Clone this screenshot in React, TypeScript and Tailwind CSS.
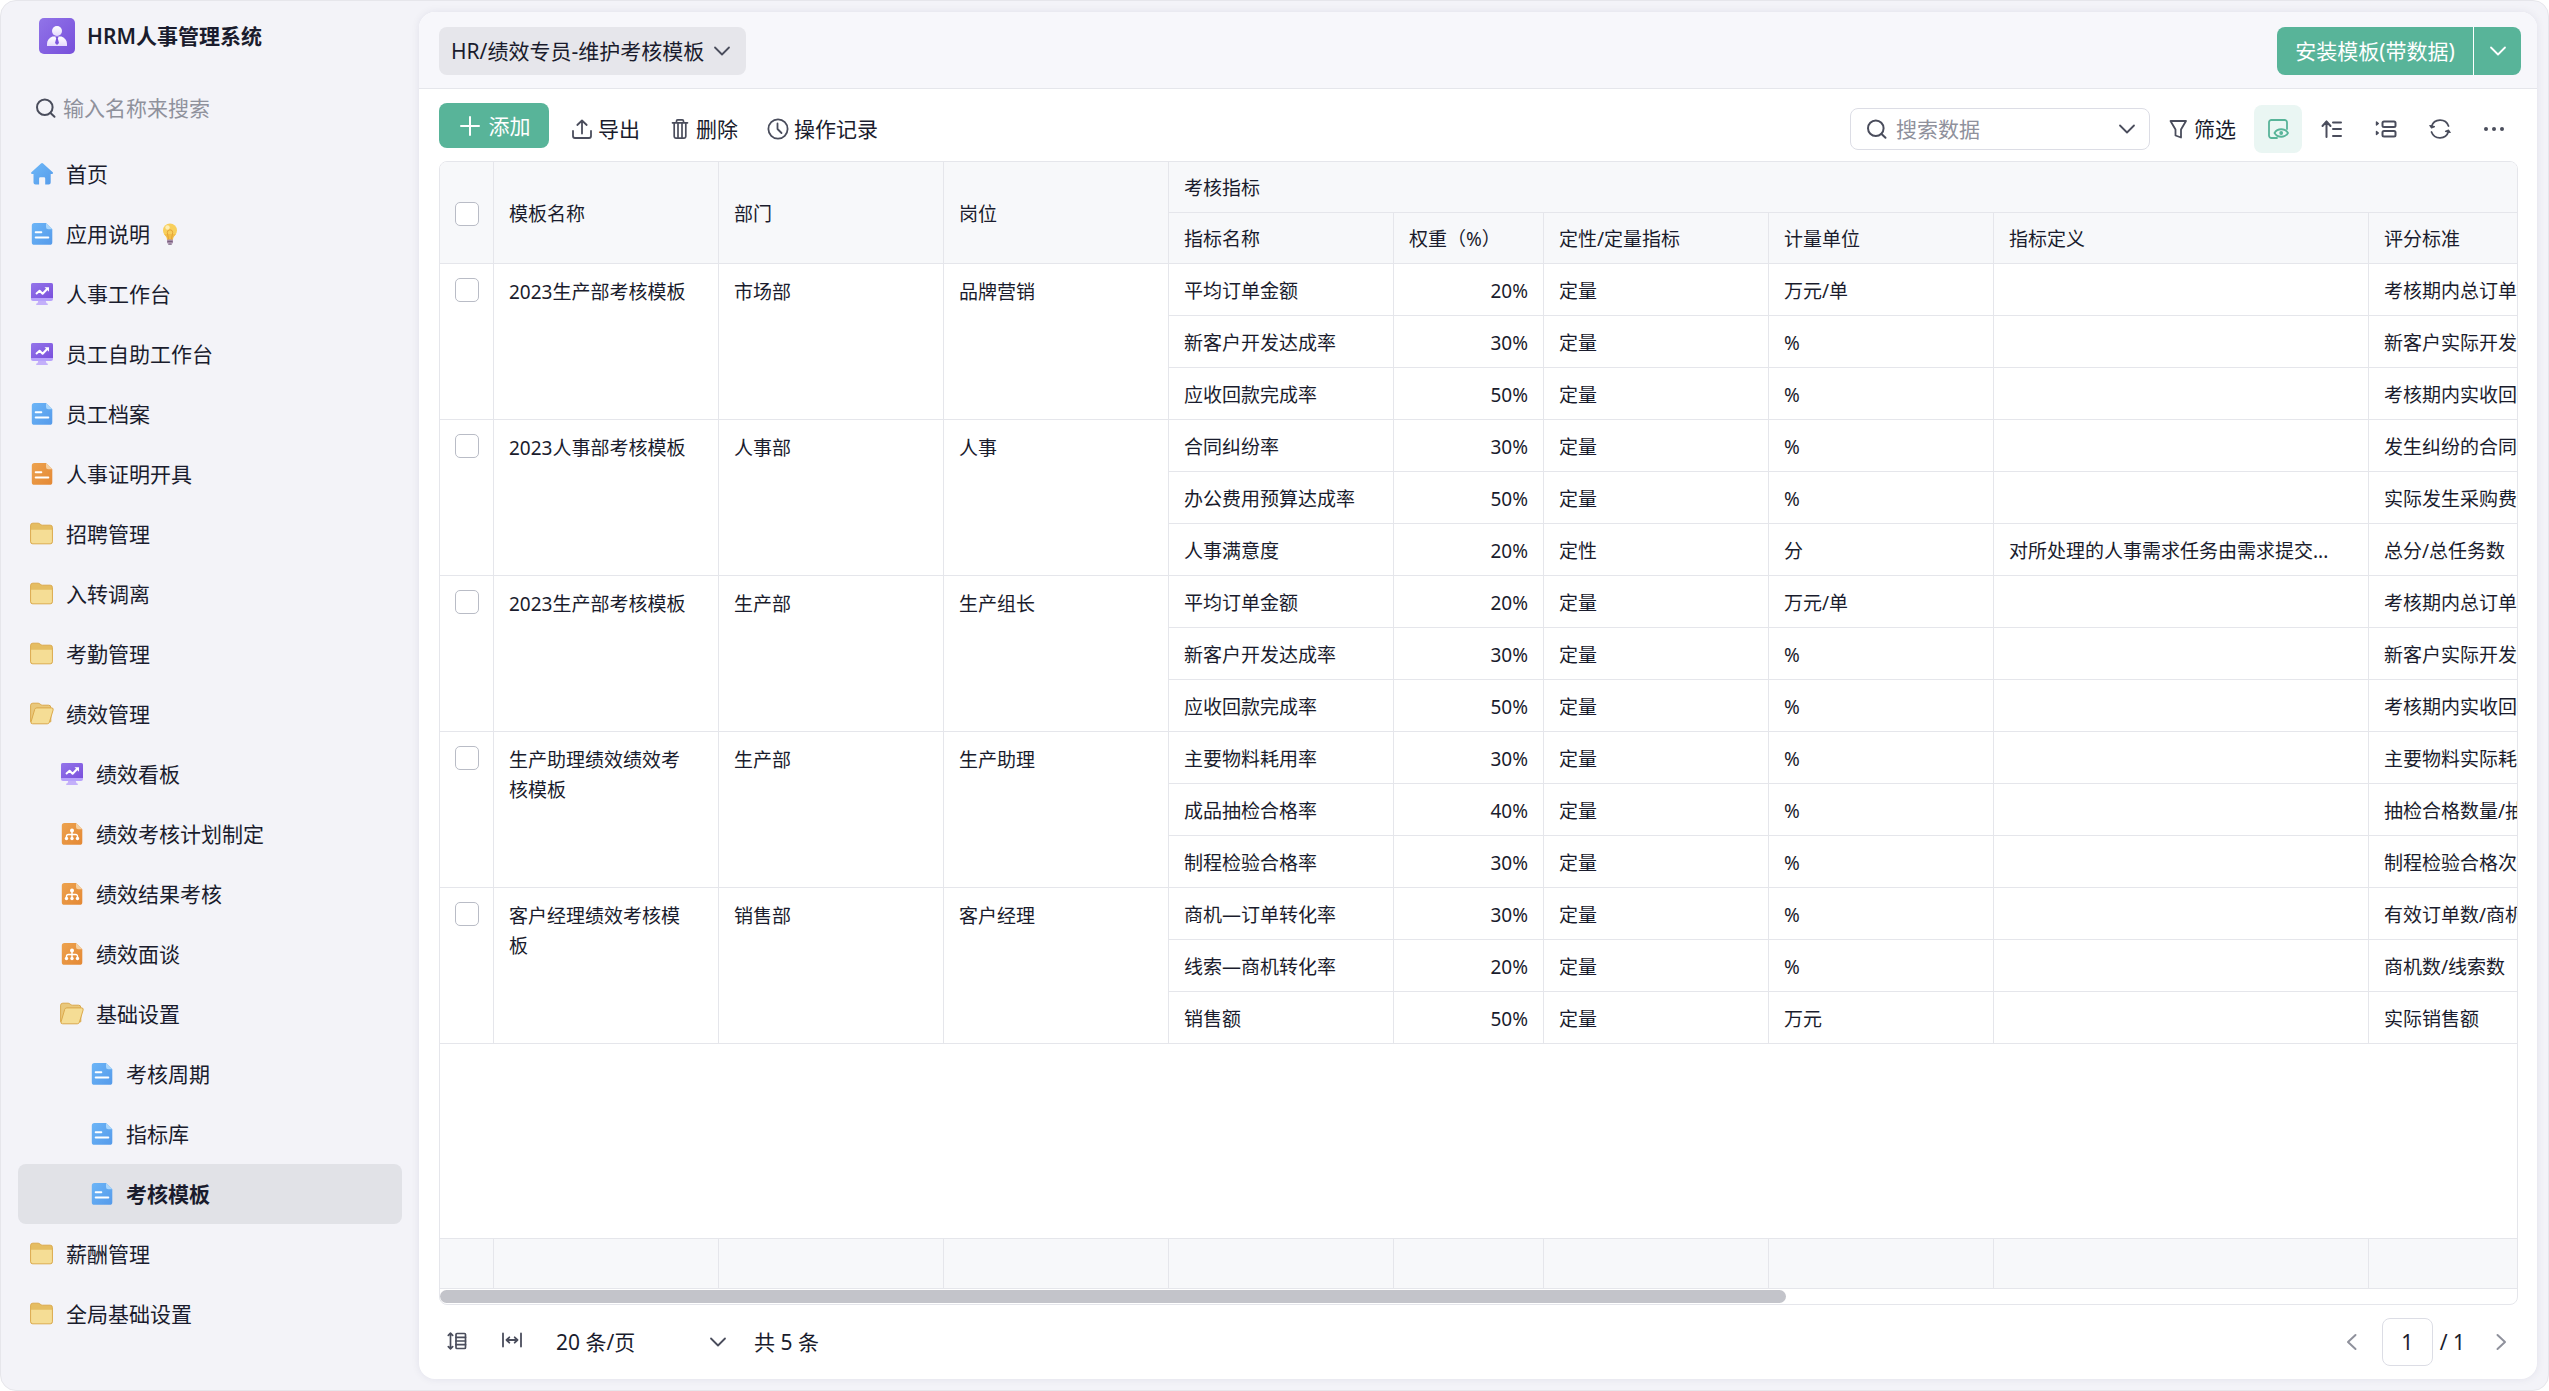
import { useState, type ReactNode } from "react";
import clsx from "clsx";

type IconName = "home" | "doc" | "docOrange" | "flow" | "board" | "folder" | "folderOpen";

type NavItem = {
  label: string;
  icon: IconName;
  level?: number;
  bulb?: boolean;
};

const NAV: NavItem[] = [
  { label: "首页", icon: "home" },
  { label: "应用说明", icon: "doc", bulb: true },
  { label: "人事工作台", icon: "board" },
  { label: "员工自助工作台", icon: "board" },
  { label: "员工档案", icon: "doc" },
  { label: "人事证明开具", icon: "docOrange" },
  { label: "招聘管理", icon: "folder" },
  { label: "入转调离", icon: "folder" },
  { label: "考勤管理", icon: "folder" },
  { label: "绩效管理", icon: "folderOpen" },
  { label: "绩效看板", icon: "board", level: 1 },
  { label: "绩效考核计划制定", icon: "flow", level: 1 },
  { label: "绩效结果考核", icon: "flow", level: 1 },
  { label: "绩效面谈", icon: "flow", level: 1 },
  { label: "基础设置", icon: "folderOpen", level: 1 },
  { label: "考核周期", icon: "doc", level: 2 },
  { label: "指标库", icon: "doc", level: 2 },
  { label: "考核模板", icon: "doc", level: 2 },
  { label: "薪酬管理", icon: "folder" },
  { label: "全局基础设置", icon: "folder" },
];

const INDENT = ["pl-3", "pl-[42px]", "pl-[72px]"];

type Metric = {
  name: string;
  weight: string;
  kind: string;
  unit: string;
  definition?: string;
  standard: string;
};

type Template = {
  name: string;
  dept: string;
  post: string;
  metrics: Metric[];
};

const SALES_METRICS: Metric[] = [
  { name: "平均订单金额", weight: "20%", kind: "定量", unit: "万元/单", standard: "考核期内总订单" },
  { name: "新客户开发达成率", weight: "30%", kind: "定量", unit: "%", standard: "新客户实际开发" },
  { name: "应收回款完成率", weight: "50%", kind: "定量", unit: "%", standard: "考核期内实收回" },
];

const TEMPLATES: Template[] = [
  { name: "2023生产部考核模板", dept: "市场部", post: "品牌营销", metrics: SALES_METRICS },
  {
    name: "2023人事部考核模板",
    dept: "人事部",
    post: "人事",
    metrics: [
      { name: "合同纠纷率", weight: "30%", kind: "定量", unit: "%", standard: "发生纠纷的合同" },
      { name: "办公费用预算达成率", weight: "50%", kind: "定量", unit: "%", standard: "实际发生采购费" },
      {
        name: "人事满意度",
        weight: "20%",
        kind: "定性",
        unit: "分",
        definition: "对所处理的人事需求任务由需求提交...",
        standard: "总分/总任务数",
      },
    ],
  },
  { name: "2023生产部考核模板", dept: "生产部", post: "生产组长", metrics: SALES_METRICS },
  {
    name: "生产助理绩效绩效考核模板",
    dept: "生产部",
    post: "生产助理",
    metrics: [
      { name: "主要物料耗用率", weight: "30%", kind: "定量", unit: "%", standard: "主要物料实际耗" },
      { name: "成品抽检合格率", weight: "40%", kind: "定量", unit: "%", standard: "抽检合格数量/抽" },
      { name: "制程检验合格率", weight: "30%", kind: "定量", unit: "%", standard: "制程检验合格次" },
    ],
  },
  {
    name: "客户经理绩效考核模板",
    dept: "销售部",
    post: "客户经理",
    metrics: [
      { name: "商机—订单转化率", weight: "30%", kind: "定量", unit: "%", standard: "有效订单数/商机" },
      { name: "线索—商机转化率", weight: "20%", kind: "定量", unit: "%", standard: "商机数/线索数" },
      { name: "销售额", weight: "50%", kind: "定量", unit: "万元", standard: "实际销售额" },
    ],
  },
];

const COLS = [
  "w-[54px]",
  "w-[225px]",
  "w-[225px]",
  "w-[225px]",
  "w-[225px]",
  "w-[150px]",
  "w-[225px]",
  "w-[225px]",
  "w-[375px]",
  "w-[375px]",
];

/* ---------- icons ---------- */

function Line({ children, className, width = 2 }: { children: ReactNode; className?: string; width?: number }) {
  return (
    <svg
      viewBox="0 0 24 24"
      fill="none"
      stroke="currentColor"
      strokeWidth={width}
      strokeLinecap="round"
      strokeLinejoin="round"
      className={clsx("size-6 shrink-0", className)}
      aria-hidden="true"
    >
      {children}
    </svg>
  );
}

const SearchIcon = () => (
  <Line className="text-[#4a4d5c]">
    <circle cx="11.8" cy="11.2" r="7.8" />
    <path d="m17.5 17 4 3.800" />
  </Line>
);

const Chevron = ({ className }: { className?: string }) => (
  <Line className={className} width={1.8}>
    <path d="m5 8.500 7 7 7-7" />
  </Line>
);

function DocShape({ from, to, fold, id }: { from: string; to: string; fold: string; id: string }) {
  return (
    <>
      <defs>
        <linearGradient id={id} x1="0" y1="0" x2="1" y2="1">
          <stop stopColor={from} />
          <stop offset="1" stopColor={to} />
        </linearGradient>
      </defs>
      <path d="M4.5 1H16l6.3 6.3v12.9a2.6 2.6 0 0 1-2.6 2.6H4.4a2.6 2.6 0 0 1-2.6-2.6V3.700A2.700 2.700 0 0 1 4.500 1Z" fill={`url(#${id})`} />
      <path d="M16 1l6.300 6.300h-4A2.300 2.300 0 0 1 16 5Z" fill={fold} />
    </>
  );
}

function NavIcon({ name }: { name: IconName }) {
  return (
    <svg viewBox="0 0 24 24" className="size-6 shrink-0" aria-hidden="true">
      {name === "home" && (
        <>
          <defs>
            <linearGradient id="home" x1="0" y1="0" x2="1" y2="1">
              <stop stopColor="#6db8f8" />
              <stop offset="1" stopColor="#569bea" />
            </linearGradient>
          </defs>
          <path
            d="M11 1.400a1.600 1.600 0 0 1 2.100 0l9.600 8.800c.7.700.3 1.700-.6 1.700H20.700v8.700a2 2 0 0 1-2 2h-3.500v-6.200a1.200 1.200 0 0 0-1.200-1.200h-3.700a1.200 1.200 0 0 0-1.200 1.200v6.200H5.500a2 2 0 0 1-2-2v-8.700H2c-.9 0-1.300-1-.6-1.700Z"
            fill="url(#home)"
          />
        </>
      )}
      {name === "doc" && (
        <>
          <DocShape id="docBlue" from="#6cb5f7" to="#559aea" fold="#a9d6fb" />
          <path d="M5.700 10.300h5.600M5.700 15.500h12.600" stroke="#fff" strokeWidth="2" strokeLinecap="round" />
        </>
      )}
      {name === "docOrange" && (
        <>
          <DocShape id="docOrange" from="#eda24e" to="#e48835" fold="#f5cf9f" />
          <path d="M5.700 10.300h5.600M5.700 15.500h12.600" stroke="#fff" strokeWidth="2" strokeLinecap="round" />
        </>
      )}
      {name === "flow" && (
        <>
          <DocShape id="flow" from="#eda24e" to="#e48835" fold="#f5cf9f" />
          <g fill="#fff">
            <circle cx="12" cy="8.500" r="2" />
            <circle cx="6.500" cy="16.500" r="1.700" />
            <circle cx="12" cy="16.500" r="1.700" />
            <circle cx="17.500" cy="16.500" r="1.700" />
          </g>
          <path d="M12 9v7M6.500 16v-1.700a1.800 1.800 0 0 1 1.800-1.800h7.400a1.800 1.800 0 0 1 1.800 1.800V16" stroke="#fff" strokeWidth="1.400" fill="none" />
        </>
      )}
      {name === "board" && (
        <>
          <defs>
            <linearGradient id="board" x1="0" y1="0" x2="1" y2="1">
              <stop stopColor="#9375ea" />
              <stop offset="1" stopColor="#7a50dc" />
            </linearGradient>
          </defs>
          <path d="M8.500 18h7l1 3.200h.4a1 1 0 0 1 .6 1.800h-11a1 1 0 0 1 .6-1.800h.4Z" fill="#c3affa" />
          <rect x="1" y="1" width="22" height="18" rx="2" fill="#b7a1fb" />
          <path d="M3 1h18a2 2 0 0 1 2 2v13H1V3a2 2 0 0 1 2-2Z" fill="url(#board)" />
          <path d="m6 12 3.600-3.200 3 3 5-5.300" stroke="#fff" strokeWidth="2" fill="none" strokeLinejoin="round" />
          <path d="M14.500 5.300H19v4.500Z" fill="#fff" />
        </>
      )}
      {name === "folder" && (
        <>
          <path d="M.6 19.800V3.200A2.200 2.200 0 0 1 2.800 1.200h5.400c1.600 0 2.400 2 4.200 2h7.800a2.200 2.200 0 0 1 2.200 2.200v14.400a2 2 0 0 1-2 2H2.600a2 2 0 0 1-2-2Z" fill="#e5bd62" stroke="#dba94c" />
          <path d="M1.100 7.800h20.800v11.500a2 2 0 0 1-2 2H3.100a2 2 0 0 1-2-2Z" fill="#f5dd95" />
        </>
      )}
      {name === "folderOpen" && (
        <>
          <path d="M.6 19.800V3.200A2.200 2.200 0 0 1 2.800 1.200h5.400c1.600 0 2.400 2 4.200 2h6.200a2.200 2.200 0 0 1 2.200 2.200v14.400H2.600Z" fill="#e9c87c" stroke="#dba94c" />
          <path d="M6.800 5.900h14.700a1.700 1.700 0 0 1 1.600 2.200l-3.700 12.100a2.200 2.200 0 0 1-2.100 1.600H2.600a1.600 1.600 0 0 1-1.500-2.100L4.700 7.400a2.200 2.200 0 0 1 2.100-1.500Z" fill="#f5dd95" stroke="#dba94c" />
        </>
      )}
    </svg>
  );
}

const Bulb = () => (
  <svg viewBox="0 0 16 24" className="h-6 w-4" aria-hidden="true">
    <circle cx="8" cy="8.500" r="7" fill="#f8cf5c" />
    <path d="M2 12c1.500 2 3 3 3 6h6c0-3 1.500-4 3-6Z" fill="#f2be48" />
    <path d="M6.500 17 5.300 10.500a2.700 2.700 0 1 1 5.400 0L9.500 17" fill="none" stroke="#e5a437" />
    <circle cx="5.500" cy="5.500" r="2.200" fill="#fdeeb5" />
    <rect x="5" y="17.500" width="6" height="4" rx="1" fill="#a58aa8" />
    <path d="M5.500 19.500h5" stroke="#77607f" />
    <rect x="6.200" y="21.500" width="3.600" height="1.300" rx=".6" fill="#77607f" />
  </svg>
);

const Logo = () => (
  <svg viewBox="0 0 36 36" className="size-9" aria-hidden="true">
    <defs>
      <linearGradient id="logo" x1="0" y1="0" x2="1" y2="1">
        <stop stopColor="#9174e8" />
        <stop offset="1" stopColor="#774fdb" />
      </linearGradient>
      <linearGradient id="person" x1="0" y1="0" x2="0" y2="1">
        <stop stopColor="#fff" />
        <stop offset="1" stopColor="#e4dafc" />
      </linearGradient>
    </defs>
    <rect width="36" height="36" rx="5" fill="url(#logo)" />
    <circle cx="18" cy="13" r="5" fill="url(#person)" />
    <path d="M13.500 18.500h9c3.500 1.200 5.500 4 5.500 7.500v2H8v-2c0-3.500 2-6.300 5.500-7.500Z" fill="url(#person)" />
    <path d="M16.300 18.500h3.400l-.9 2 1.200 4.500-2 2-2-2 1.200-4.500Z" fill="#7c55dd" />
  </svg>
);

/* ---------- pieces ---------- */

function Sidebar() {
  const [active, setActive] = useState("考核模板");

  return (
    <aside className="w-[418px] shrink-0 px-[17px]">
      <div className="flex items-center gap-3 pt-[17px] pl-[21px]">
        <Logo />
        <h1 className="font-semibold">HRM人事管理系统</h1>
      </div>

      <label className="mt-9 flex h-9 items-center gap-1.5 pl-[15px]">
        <SearchIcon />
        <input
          type="text"
          placeholder="输入名称来搜索"
          aria-label="输入名称来搜索"
          className="w-60 bg-transparent outline-none placeholder:text-[#8f919c]"
        />
      </label>

      <nav className="mt-[18px]">
        {NAV.map((item) => (
          <a
            key={item.label}
            href="#"
            onClick={() => setActive(item.label)}
            className={clsx(
              "flex h-[60px] items-center gap-3 rounded-lg",
              INDENT[item.level ?? 0],
              item.label === active && "bg-[#e1e2e7] font-bold",
            )}
          >
            <NavIcon name={item.icon} />
            <span>{item.label}</span>
            {item.bulb && <Bulb />}
          </a>
        ))}
      </nav>
    </aside>
  );
}

function ToolButton({ label, children }: { label: string; children: ReactNode }) {
  return (
    <button type="button" className="flex h-[52px] cursor-pointer items-center gap-1">
      {children}
      <span>{label}</span>
    </button>
  );
}

function IconButton({ label, active, children }: { label: string; active?: boolean; children: ReactNode }) {
  return (
    <button
      type="button"
      aria-label={label}
      className={clsx(
        "flex size-12 cursor-pointer items-center justify-center rounded-lg",
        active ? "bg-[#eaf6f3] text-[#58b499]" : "text-[#4a4d5c]",
      )}
    >
      {children}
    </button>
  );
}

function Toolbar() {
  return (
    <div className="flex h-[72px] items-start justify-between pt-[14px] pr-[19px] pl-5">
      <div className="flex items-start">
        <button
          type="button"
          className="mr-[21px] flex h-[45px] w-[110px] cursor-pointer items-center justify-center gap-[7px] rounded-lg bg-[#58b499] text-white"
        >
          <Line>
            <path d="M12 3v18M3 12h18" />
          </Line>
          添加
        </button>
        <div className="flex gap-7">
          <ToolButton label="导出">
            <Line className="text-[#4a4d5c]" width={1.8}>
              <path d="M3 14v5a2 2 0 0 0 2 2h14a2 2 0 0 0 2-2v-5M12 16.500V3.500M7.300 8 12 3.500 16.700 8" />
            </Line>
          </ToolButton>
          <ToolButton label="删除">
            <Line className="text-[#4a4d5c]" width={1.7}>
              <path d="M4.500 5.800h15M8.500 5.800V4A1.200 1.200 0 0 1 9.700 2.800h4.600A1.200 1.200 0 0 1 15.500 4v1.800M6.200 5.800v13.500a1.800 1.800 0 0 0 1.800 1.800h8a1.800 1.800 0 0 0 1.800-1.800V5.800M10 6v15M14 6v15" />
            </Line>
          </ToolButton>
          <ToolButton label="操作记录">
            <Line className="text-[#4a4d5c]" width={1.8}>
              <circle cx="12" cy="12" r="9.600" />
              <path d="M11.500 6.500V12l4 4" />
            </Line>
          </ToolButton>
        </div>
      </div>

      <div className="flex h-[52px] items-center">
        <label className="mr-4 flex h-[42px] w-[300px] items-center gap-2 rounded-lg border border-[#dcdde5] pr-2.5 pl-[13px] text-[#4a4d5c]">
          <SearchIcon />
          <input
            type="text"
            placeholder="搜索数据"
            aria-label="搜索数据"
            className="w-0 flex-1 bg-transparent outline-none placeholder:text-[#8f919c]"
          />
          <Chevron />
        </label>
        <div className="mr-[18px]">
          <ToolButton label="筛选">
            <Line className="text-[#4a4d5c]" width={1.8}>
              <path d="M4.500 4h15.500l-5 8.500v8l-5.500-2v-6Z" />
            </Line>
          </ToolButton>
        </div>
        <div className="flex gap-1.5">
          <IconButton label="预览" active>
            <Line width={1.8}>
              <path d="M11 21H5.500A2.500 2.500 0 0 1 3 18.500v-13A2.500 2.500 0 0 1 5.500 3h13A2.500 2.500 0 0 1 21 5.500V12" />
              <path d="M8.500 16c3-5 10.500-5 13.500 0-3 5-10.500 5-13.500 0Z" />
              <circle cx="15.200" cy="16" r="1" />
            </Line>
          </IconButton>
          <IconButton label="排序">
            <Line>
              <path d="M6.500 20V4.500M2.500 9l4-4.500 4 4.500M13 5.500h8M13 12h8M13 19h8" />
            </Line>
          </IconButton>
          <IconButton label="分组">
            <Line>
              <rect x="8.500" y="4.500" width="13" height="5.500" rx="1.500" />
              <rect x="8.500" y="14" width="13" height="5.500" rx="1.500" />
              <path d="M2.500 5v3L4.300 6.500ZM2.500 14.500v3L4.300 16Z" fill="currentColor" strokeWidth="1.400" />
            </Line>
          </IconButton>
          <IconButton label="刷新">
            <Line width={1.8}>
              <path d="M3.500 9.500A9 9 0 0 1 20.500 9M20.500 14.500A9 9 0 0 1 3.500 15" />
              <path d="M1.800 8.500 3.500 11l3-1.300ZM22.200 15.500 20.500 13l-3 1.300Z" fill="currentColor" strokeWidth="1.200" />
            </Line>
          </IconButton>
          <IconButton label="更多">
            <svg viewBox="0 0 24 24" fill="currentColor" className="size-6" aria-hidden="true">
              <circle cx="4" cy="12" r="2" />
              <circle cx="12" cy="12" r="2" />
              <circle cx="20" cy="12" r="2" />
            </svg>
          </IconButton>
        </div>
      </div>
    </div>
  );
}

function Tick({ label }: { label: string }) {
  return (
    <input
      type="checkbox"
      aria-label={label}
      className="block size-6 cursor-pointer appearance-none rounded-[5px] border border-[#b9bcc6] bg-white checked:bg-[#58b499]"
    />
  );
}

const line = "border-r border-b border-[#e5e6eb]";
const th = `${line} px-[15px] pt-0.5 text-left font-normal`;
const td = `${line} truncate px-[15px] pt-0.5`;
const tall = `${line} pt-[13px] pr-6 pl-[15px] align-top`;

function DataTable() {
  return (
    <div className="mr-[19px] ml-5 flex flex-1 flex-col overflow-hidden rounded-lg border border-[#e5e6eb] text-[19px]">
      <div className="flex-1">
        <table className="w-[2304px] table-fixed border-separate border-spacing-0 leading-[30px]">
          <colgroup>
            {COLS.map((w, i) => (
              <col key={i} className={w} />
            ))}
          </colgroup>
          <thead className="bg-[#f7f8fa]">
            <tr className="h-[51px]">
              <th rowSpan={2} className={th}>
                <Tick label="全选" />
              </th>
              <th rowSpan={2} className={th}>模板名称</th>
              <th rowSpan={2} className={th}>部门</th>
              <th rowSpan={2} className={th}>岗位</th>
              <th colSpan={6} className={th}>考核指标</th>
            </tr>
            <tr className="h-[51px]">
              <th className={th}>指标名称</th>
              <th className={th}>权重（%）</th>
              <th className={th}>定性/定量指标</th>
              <th className={th}>计量单位</th>
              <th className={th}>指标定义</th>
              <th className={th}>评分标准</th>
            </tr>
          </thead>
          <tbody>
            {TEMPLATES.map((t, i) =>
              t.metrics.map((m, j) => (
                <tr key={`${i}-${j}`} className="h-[52px]">
                  {j === 0 && (
                    <>
                      <td rowSpan={3} className={`${line} px-[15px] pt-[14px] align-top`}>
                        <Tick label={`选择 ${t.name}`} />
                      </td>
                      <td rowSpan={3} className={tall}>{t.name}</td>
                      <td rowSpan={3} className={tall}>{t.dept}</td>
                      <td rowSpan={3} className={tall}>{t.post}</td>
                    </>
                  )}
                  <td className={td}>{m.name}</td>
                  <td className={`${td} text-right`}>{m.weight}</td>
                  <td className={td}>{m.kind}</td>
                  <td className={td}>{m.unit}</td>
                  <td className={td}>{m.definition}</td>
                  <td className={td}>{m.standard}</td>
                </tr>
              )),
            )}
          </tbody>
        </table>
      </div>

      {/* summary row */}
      <div className="flex h-[51px] border-y border-[#e5e6eb] bg-[#f7f8fa]">
        {COLS.map((w, i) => (
          <div key={i} className={clsx(w, "shrink-0 border-r border-[#e5e6eb]")} />
        ))}
      </div>

      <div className="h-[15px] py-px">
        <div className="h-[13px] w-[64.8%] rounded-full bg-[#c3c4ca]" />
      </div>
    </div>
  );
}

function Pager() {
  return (
    <div className="flex h-[74px] items-center pr-6 pl-[26px]">
      <button type="button" aria-label="行高" className="cursor-pointer text-[#4a4d5c]">
        <Line width={1.7}>
          <path d="M5.500 3.500v15M3.300 5.300 5.500 3.200l2.200 2.100M3.300 16.700l2.200 2.100 2.200-2.100" />
          <rect x="11" y="3.500" width="9.500" height="15" rx="1" />
          <path d="M11 7.300h9.500M11 11h9.500M11 14.700h9.500" />
        </Line>
      </button>
      <button type="button" aria-label="列宽" className="ml-[31px] cursor-pointer text-[#4a4d5c]">
        <Line width={1.8}>
          <path d="M3 3.500v13M21 3.500v13M7 10h10M9.300 7.300 6.500 10l2.800 2.700M14.700 7.300l2.800 2.700-2.800 2.700" />
        </Line>
      </button>
      <div className="relative ml-8 flex items-center">
        <select aria-label="每页条数" className="h-10 w-[174px] cursor-pointer appearance-none bg-transparent outline-none">
          <option>20 条/页</option>
          <option>50 条/页</option>
          <option>100 条/页</option>
        </select>
        <Chevron className="pointer-events-none absolute right-0 text-[#4a4d5c]" />
      </div>
      <span className="ml-6">共 5 条</span>

      <div className="ml-auto flex items-center">
        <button type="button" aria-label="上一页" className="mr-[18px] cursor-pointer text-[#8f919c]">
          <Line>
            <path d="m15.500 5-7.500 7 7.500 7" />
          </Line>
        </button>
        <input
          type="text"
          defaultValue="1"
          aria-label="页码"
          className="h-12 w-[51px] rounded-lg border border-[#dcdde5] text-center outline-none"
        />
        <span className="ml-[7px]">/ 1</span>
        <button type="button" aria-label="下一页" className="ml-6 cursor-pointer text-[#8f919c]">
          <Line>
            <path d="m8.500 5 7.500 7-7.500 7" />
          </Line>
        </button>
      </div>
    </div>
  );
}

export default function App() {
  return (
    <div className="bg-white font-['Noto_Sans','Noto_Sans_CJK_SC',sans-serif] text-[21px] leading-[30px] text-[#1a1c2d]">
      <div className="flex min-h-screen rounded-2xl border border-[#e6e6eb] bg-[#f3f3f8]">
        <Sidebar />

        <main className="my-[11px] mr-[11px] flex min-w-0 flex-1 flex-col overflow-hidden rounded-2xl bg-white shadow-[0_0_8px_rgba(30,30,80,0.08)]">
          <header className="flex h-[77px] items-start justify-between border-b border-[#e5e6eb] bg-[#f7f7fb] pt-[15px] pr-4 pl-5">
            <button type="button" className="flex h-12 cursor-pointer items-center gap-1.5 rounded-lg bg-[#e6e6eb] pr-3 pl-3">
              HR/绩效专员-维护考核模板
              <Chevron className="text-[#4a4d5c]" />
            </button>
            <div className="flex h-12 overflow-hidden rounded-lg bg-[#58b499] text-white">
              <button type="button" className="w-[197px] cursor-pointer border-r border-white">
                安装模板(带数据)
              </button>
              <button type="button" aria-label="更多安装选项" className="flex w-[47px] cursor-pointer items-center justify-center">
                <Chevron />
              </button>
            </div>
          </header>
          <Toolbar />
          <DataTable />
          <Pager />
        </main>
      </div>
    </div>
  );
}
